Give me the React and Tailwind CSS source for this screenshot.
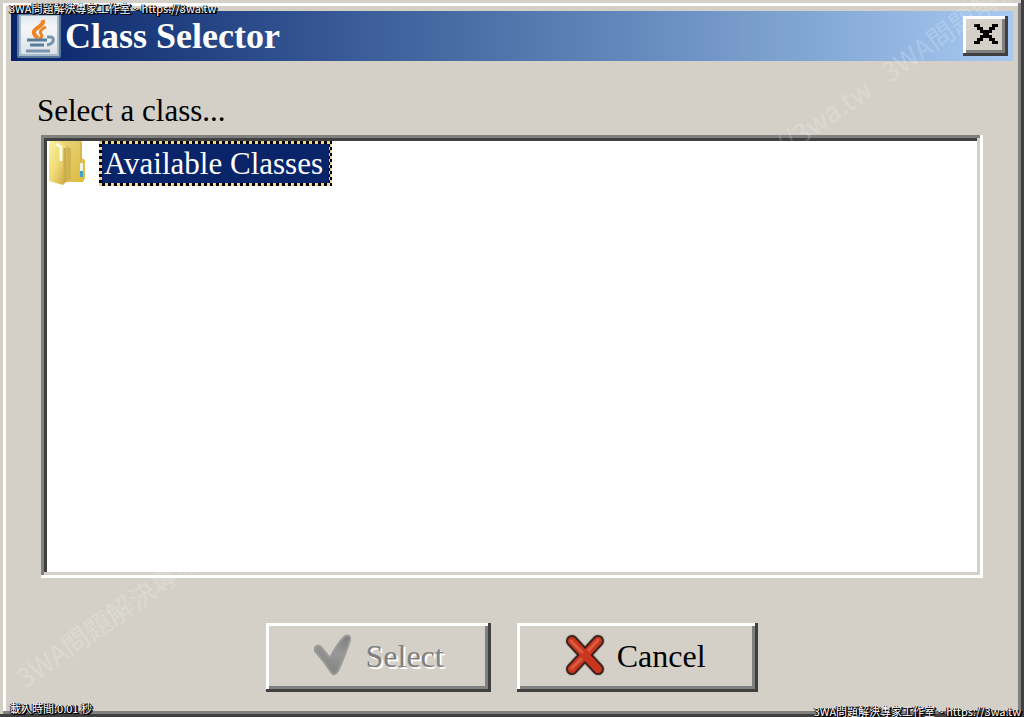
import { useState } from 'react';

const SITE = '3WA問題解決專家工作室 ~ https://3wa.tw';

const raised = 'bg-[#d4d0c8] shadow-[inset_-3px_-3px_#404040,inset_3px_3px_#fff,inset_-6px_-6px_#808080]';
const stamp = 'absolute font-["Noto_Sans_CJK_TC",sans-serif] text-[11px] leading-3 whitespace-nowrap text-white [text-shadow:1px_1px_#000,2px_1px_#000,1px_0_#000,0_1px_#000,-1px_0_#000]';

const JavaIcon = () => (
    <svg viewBox="0 0 44 44" className="w-11 h-11 shrink-0" aria-hidden="true">
        <defs>
            <linearGradient id="java-bg" x1="0" y1="0" x2="0" y2="1">
                <stop offset="0" stopColor="#dfe9ef" />
                <stop offset="0.3" stopColor="#f6f6f6" />
                <stop offset="1" stopColor="#dde2e6" />
            </linearGradient>
        </defs>
        <rect x="0" y="0" width="44" height="44" rx="2" fill="#58789c" />
        <rect x="2" y="1" width="40" height="41" fill="#a4bccb" />
        <rect x="4" y="2" width="36" height="38" fill="url(#java-bg)" />
        <path d="M26 6 C27 10 23 12 19 15 C15 18 17 21 21 24" fill="none" stroke="#ef8427" strokeWidth="4" />
        <path d="M29 13 C25 15 22 17 24 20 C26 22 25 23 22 25" fill="none" stroke="#ef8427" strokeWidth="3" />
        <path d="M10 26 H30" stroke="#587d9b" strokeWidth="3" />
        <path d="M13 31 H27" stroke="#587d9b" strokeWidth="3" />
        <path d="M30 23 H34 C38 24 37 30 30 31" fill="none" stroke="#7695ac" strokeWidth="3" />
        <path d="M9 37 H33" stroke="#7893ad" strokeWidth="3" />
    </svg>
);

const CloseIcon = () => (
    <svg viewBox="0 0 8 7" preserveAspectRatio="none" shapeRendering="crispEdges" className="w-6 h-5" aria-hidden="true">
        <path d="M0 0h2v1H0z M6 0h2v1H6z M1 1h2v1H1z M5 1h2v1H5z M2 2h4v1H2z M3 3h2v1H3z M2 4h4v1H2z M1 5h2v1H1z M5 5h2v1H5z M0 6h2v1H0z M6 6h2v1H6z" />
    </svg>
);

const FolderIcon = () => (
    <svg viewBox="0 0 38 45" className="w-[38px] h-[45px] shrink-0" aria-hidden="true">
        <defs>
            <linearGradient id="folder-front" x1="0" y1="0" x2="1" y2="1">
                <stop offset="0" stopColor="#fdf3a4" />
                <stop offset="0.5" stopColor="#eed974" />
                <stop offset="1" stopColor="#cba43d" />
            </linearGradient>
            <linearGradient id="folder-back" x1="0" y1="0" x2="1" y2="1">
                <stop offset="0" stopColor="#e9d680" />
                <stop offset="1" stopColor="#ddb93b" />
            </linearGradient>
        </defs>
        <path d="M11 0 H33 V17 L36 19 V37 L34 41 H14z" fill="url(#folder-back)" />
        <path d="M17 4 L22 8 V38 L17 41z" fill="#d0b454" />
        <path d="M32 2 V22" stroke="#d3b752" strokeWidth="2" />
        <path d="M1 0 H10 L18 5 V40 L14 44 L0 40 V2z" fill="url(#folder-front)" />
        <path d="M7 3 L12 6 V20" fill="none" stroke="#fffbe2" strokeWidth="3" />
        <path d="M16 7 V41" stroke="#c9ac4c" strokeWidth="3" />
        <rect x="31" y="22" width="3" height="8" fill="#eef3e9" />
        <rect x="31" y="30" width="3" height="6" fill="#3ba4cf" />
    </svg>
);

const CheckIcon = () => (
    <svg viewBox="0 0 40 45" className="w-10 h-[45px] shrink-0" aria-hidden="true">
        <defs>
            <linearGradient id="check-fill" x1="1" y1="0" x2="0.5" y2="1">
                <stop offset="0" stopColor="#7c7c7c" />
                <stop offset="0.5" stopColor="#989898" />
                <stop offset="1" stopColor="#828282" />
            </linearGradient>
        </defs>
        <path d="M2 15 Q4 11 8 14 L17 25 Q24 11 32 3 Q38 1 37 7 Q33 20 25 38 Q21 44 18 39 Q11 28 2 18z" fill="url(#check-fill)" stroke="#9a9a98" strokeWidth="2" />
    </svg>
);

const CancelIcon = () => (
    <svg viewBox="0 0 40 45" className="w-10 h-[45px] shrink-0" aria-hidden="true">
        <path d="M7 8 L33 36 M33 8 L7 36" stroke="#a7a29b" strokeWidth="14" strokeLinecap="round" opacity="0.5" />
        <path d="M7 8 L33 36 M33 8 L7 36" stroke="#37211c" strokeWidth="12" strokeLinecap="round" />
        <path d="M7 8 L33 36 M33 8 L7 36" stroke="#c8361d" strokeWidth="8" strokeLinecap="round" />
        <path d="M6 8 L17 19 M33 7 L24 17 M7 35 L16 26" stroke="#dd5a43" strokeWidth="3" strokeLinecap="round" />
    </svg>
);

const App = () => {
    const [selected, setSelected] = useState(true);

    return (
        <div className="relative min-h-screen overflow-hidden flex flex-col p-[11px] bg-[#d4d0c8] text-black font-['Liberation_Serif',serif] shadow-[inset_-3px_-3px_#404040,inset_3px_3px_#d4d0c8,inset_-6px_-6px_#808080,inset_6px_6px_#fff]">
            <header className="flex items-center h-[50px] pl-1.5 pr-[5px] bg-linear-to-r from-[#0a246a] to-[#a6caf0]">
                <JavaIcon />
                <h1 className="ml-1 flex-1 text-4xl font-bold text-white">Class Selector</h1>
                <button aria-label="Close" className={`flex items-center justify-center w-[45px] h-10 pb-1 ${raised}`}>
                    <CloseIcon />
                </button>
            </header>

            <main className="flex-1 flex flex-col pt-[30px] px-[30px] pb-[14px]">
                <h2 id="tree-label" className="-ml-1 mb-1 text-[31px] leading-10">Select a class...</h2>
                <div
                    role="tree"
                    aria-labelledby="tree-label"
                    className="flex-1 p-1.5 bg-white shadow-[inset_-3px_-3px_#fff,inset_3px_3px_#808080,inset_-6px_-6px_#d4d0c8,inset_6px_6px_#404040]"
                >
                    <div role="treeitem" aria-selected={selected} className="flex items-center gap-3 pl-0.5">
                        <FolderIcon />
                        <button
                            onClick={() => setSelected(true)}
                            className="p-[3px] bg-[repeating-conic-gradient(#000_0_25%,#f5d38e_0_50%)] bg-size-[6px_6px]"
                        >
                            <span className="block pl-0.5 pr-1.5 bg-[#0a246a] text-white text-[31px] leading-[39px]">Available Classes</span>
                        </button>
                    </div>
                </div>

                <div className="mt-[45px] flex justify-center gap-[26px] text-[32px]">
                    <button disabled className={`flex items-center gap-3 h-[69px] px-[47px] pb-1 text-[#808080] [text-shadow:2px_2px_#fff] ${raised}`}>
                        <CheckIcon />
                        Select
                    </button>
                    <button className={`flex items-center gap-3 h-[69px] pl-12 pr-[52px] pb-1 ${raised}`}>
                        <CancelIcon />
                        Cancel
                    </button>
                </div>
            </main>

            <div className="pointer-events-none absolute left-7 bottom-6 flex origin-bottom-left -rotate-35 font-['Noto_Sans_CJK_TC',sans-serif] text-[27px] leading-8 whitespace-nowrap text-white/20" aria-hidden="true">
                <span className="w-[528px] shrink-0">{SITE}</span>
                <span className="w-[528px] shrink-0">{SITE}</span>
                <span className="w-[528px] shrink-0">{SITE}</span>
            </div>
            <span className={`${stamp} left-[9px] top-0.5`}>{SITE}</span>
            <span className={`${stamp} left-[10px] bottom-[3px]`}>載入時間:0.01 秒</span>
            <span className={`${stamp} right-[3px] bottom-0`}>{SITE}</span>
        </div>
    );
};

export default App;
